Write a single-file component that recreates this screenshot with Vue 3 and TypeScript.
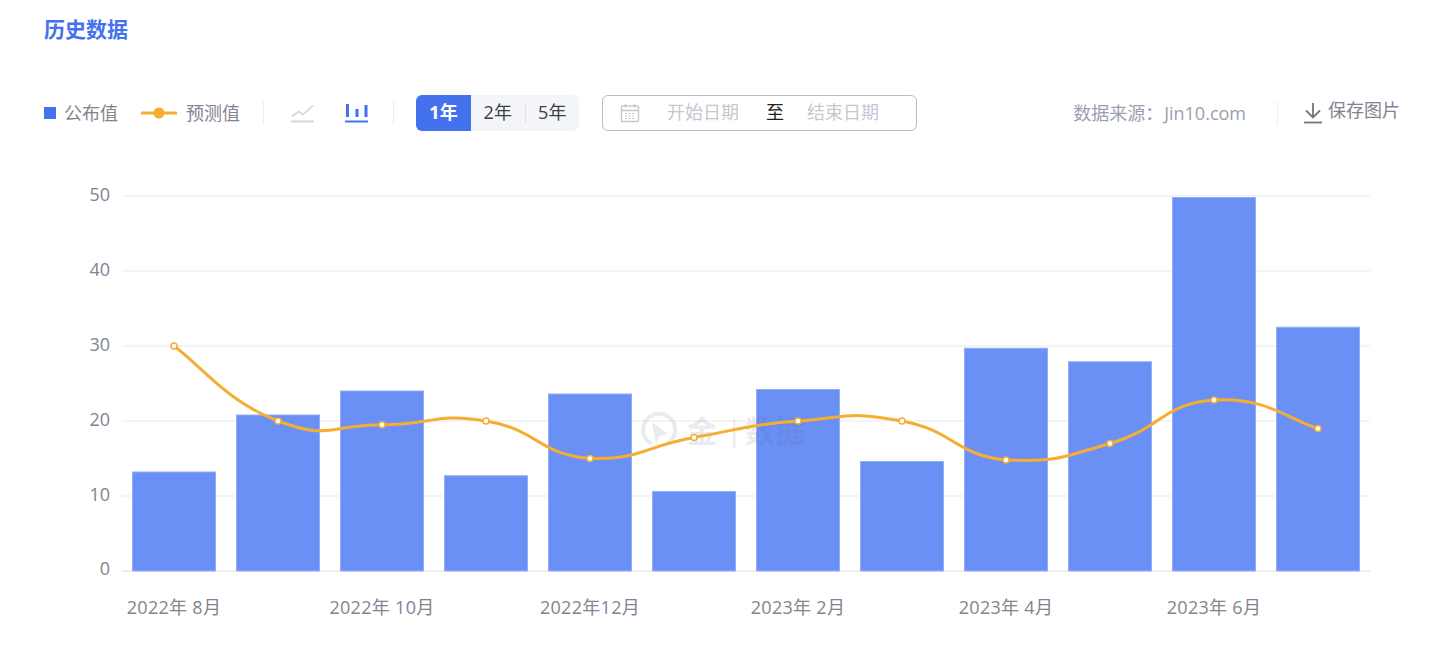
<template>
  <div class="page">
    <h2 class="title">历史数据</h2>

    <div class="toolbar">
      <div class="legend">
        <span class="legend-square"></span>
        <span class="label">公布值</span>
      </div>
      <div class="legend legend-line">
        <svg width="36" height="14" viewBox="0 0 36 14">
          <path d="M1 7H35" stroke="#f5ae31" stroke-width="3" stroke-linecap="round" />
          <circle cx="18" cy="7" r="5.5" fill="#f5ae31" />
        </svg>
        <span class="label">预测值</span>
      </div>
      <span class="divider first"></span>
      <svg class="type-icon" width="24" height="20" viewBox="0 0 24 20" fill="none" stroke="#d2d4d9">
        <path d="M1 13.5L7.5 8.5L12 11.5L22 2.5" stroke-width="1.6" />
        <path d="M0 18.5H23" stroke-width="2" />
      </svg>
      <svg class="type-icon bars" width="24" height="20" viewBox="0 0 24 20" fill="none" stroke="#4472ee">
        <path d="M2.5 1V14M12 6V14M21 2V14" stroke-width="3" />
        <path d="M0 18.5H23" stroke-width="2" />
      </svg>
      <span class="divider second"></span>

      <div class="tabs">
        <span class="tab active">1年</span>
        <span class="tab">2年</span>
        <span class="tab-sep"></span>
        <span class="tab">5年</span>
      </div>

      <div class="date-box">
        <svg width="20" height="20" viewBox="0 0 20 20" fill="none" stroke="#c4c7cd" stroke-width="1.4">
          <rect x="1.5" y="3" width="17" height="15.5" rx="1" />
          <path d="M1.5 7.5H18.5M5.5 1V4.5M14.5 1V4.5" />
          <path d="M5 10.5H15M5 13H15M5 15.5H15" stroke-dasharray="2 1.5" stroke-width="1.2" />
        </svg>
        <span class="placeholder start">开始日期</span>
        <span class="to">至</span>
        <span class="placeholder">结束日期</span>
      </div>

      <div class="right">
        <span class="source">数据来源：<span class="source-site">Jin10.com</span></span>
        <span class="divider third"></span>
        <svg width="20" height="22" viewBox="0 0 20 22" fill="none" stroke="#71767f" stroke-width="1.8">
          <path d="M10 1V15M3 8.5L10 15.5L17 8.5" />
          <path d="M1 20.5H19" />
        </svg>
        <span class="save">保存图片</span>
      </div>
    </div>

    <svg class="chart" width="1447" height="490" viewBox="0 155 1447 490">
      <line
        v-for="tick in ticks"
        :key="tick"
        x1="122"
        x2="1370"
        :y1="toY(tick)"
        :y2="toY(tick)"
        :stroke="tick === 0 ? '#e6e9f0' : '#f0f1f4'"
        stroke-width="1.5"
      />
      <text
        v-for="tick in ticks"
        :key="'y' + tick"
        x="110"
        :y="toY(tick) + (tick === 0 ? 4 : 5)"
        class="axis"
        text-anchor="end"
      >{{ tick }}</text>

      <rect
        v-for="(bar, i) in published"
        :key="'b' + i"
        :x="toX(i) - 41.5"
        :y="toY(bar)"
        width="83"
        :height="571 - toY(bar)"
        fill="#6b90f5"
        stroke="#92aef8"
        stroke-width="1"
      />

      <g class="watermark">
        <path d="M668 443A16 16 0 1 0 652 444" fill="none" stroke="#4f6284" stroke-width="4" />
        <path d="M652 422L668 434L659 436L656 446Z" fill="#4f6284" />
        <text x="687" y="442" class="mark-text">金</text>
        <text x="726" y="441" class="mark-text thin">|</text>
        <text x="745" y="442" class="mark-text">数据</text>
      </g>

      <path :d="linePath" fill="none" stroke="#f5ae31" stroke-width="3" />
      <circle
        v-for="(value, i) in forecast"
        :key="'p' + i"
        :cx="toX(i)"
        :cy="toY(value)"
        r="3"
        fill="#fff"
        stroke="#f5ae31"
        stroke-width="1.5"
      />

      <text
        v-for="label in xLabels"
        :key="label.text"
        :x="toX(label.index)"
        y="614"
        class="axis date"
        text-anchor="middle"
      >{{ label.text }}</text>
    </svg>
  </div>
</template>

<script setup lang="ts">
import { computed } from 'vue';

const ticks = [50, 40, 30, 20, 10, 0];
const published = [13.2, 20.8, 24, 12.7, 23.6, 10.6, 24.2, 14.6, 29.7, 27.9, 49.8, 32.5];
const forecast = [30, 20, 19.5, 20, 15, 17.8, 20, 20, 14.8, 17, 22.8, 19];
const xLabels = [
  { index: 0, text: '2022年 8月' },
  { index: 2, text: '2022年 10月' },
  { index: 4, text: '2022年12月' },
  { index: 6, text: '2023年 2月' },
  { index: 8, text: '2023年 4月' },
  { index: 10, text: '2023年 6月' },
];
// the curve leaves these two lows almost flat
const flatLows = [4, 8];

const toX = (i: number) => 174 + i * 104;
const toY = (v: number) => 571 - v * 7.5;

// same idea as echarts smooth line: control points follow the neighbours
const linePath = computed(() => {
  const pts = forecast.map((v, i) => [toX(i), toY(v)]);
  const k = 0.25;
  let d = `M${pts[0][0]} ${pts[0][1]}`;
  for (let i = 0; i < pts.length - 1; i++) {
    const prev = pts[i - 1] ?? pts[i];
    const cur = pts[i];
    const next = pts[i + 1];
    const after = pts[i + 2] ?? next;
    const c1x = cur[0] + (next[0] - prev[0]) * k;
    const c1y = cur[1] + (next[1] - prev[1]) * (flatLows.includes(i) ? 0.08 : k);
    const c2x = next[0] - (after[0] - cur[0]) * k;
    const c2y = next[1] - (after[1] - cur[1]) * k;
    d += `C${c1x} ${c1y} ${c2x} ${c2y} ${next[0]} ${next[1]}`;
  }
  return d;
});
</script>

<style scoped>
.page {
  width: 1447px;
  height: 645px;
  overflow: hidden;
  background: #fff;
  font-family: "Open Sans", "Noto Sans CJK SC", sans-serif;
  font-size: 18px;
  color: #80858f;
}

.title {
  margin: 0;
  padding: 14px 0 1px 44px;
  height: 30px;
  font-size: 21px;
  line-height: 30px;
  font-weight: 700;
  color: #4472ee;
}

.toolbar {
  display: flex;
  align-items: center;
  height: 36px;
  margin-top: 50px;
  padding: 0 47px 0 44px;
}

.legend {
  display: flex;
  align-items: center;
}

.label {
  padding-bottom: 2px;
}

.legend-square {
  width: 12px;
  height: 12px;
  margin-right: 8px;
  background: #4472ee;
}

.legend-line {
  margin-left: 23px;
}

.legend-line svg {
  margin-right: 9px;
}

.divider {
  width: 1px;
  height: 24px;
  background: #eeeff2;
}

.divider.first {
  margin: 0 27px 0 23px;
}

.divider.second {
  margin: 0 22px 0 24px;
}

.divider.third {
  margin: 0 25px 0 31px;
}

.type-icon.bars {
  margin-left: 30px;
}

.tabs {
  display: flex;
  align-items: center;
  width: 163px;
  height: 36px;
  border-radius: 6px;
  background: #f3f5f9;
  overflow: hidden;
  color: #3c3f47;
}

.tab {
  flex: 1;
  height: 36px;
  line-height: 35px;
  text-align: center;
}

.tab.active {
  flex: 0 0 55px;
  background: #4472ee;
  color: #fff;
  font-weight: 700;
}

.tab-sep {
  width: 1px;
  height: 20px;
  background: #dfe1e6;
}

.date-box {
  display: flex;
  align-items: center;
  width: 315px;
  height: 36px;
  box-sizing: border-box;
  margin-left: 23px;
  padding-left: 17px;
  border: 1px solid #b9bcc2;
  border-radius: 6px;
}

.placeholder {
  padding-bottom: 5px;
  color: #c5c8d0;
}

.placeholder.start {
  margin-left: 27px;
}

.to {
  margin: 0 23px 0 27px;
  padding-bottom: 5px;
  color: #222;
}

.right {
  display: flex;
  align-items: center;
  margin-left: auto;
}

.source {
  padding-bottom: 2px;
  color: #9a9fb0;
}

.source-site {
  margin-left: 1px;
}

.save {
  margin-left: 5px;
  padding-bottom: 8px;
  color: #80858f;
}

.chart {
  display: block;
  margin-top: 24px;
}

.axis {
  font-size: 18px;
  fill: #80858f;
}

.axis.date {
  letter-spacing: 0.3px;
}

.watermark {
  opacity: 0.12;
}

.mark-text {
  font-size: 30px;
  font-weight: 700;
  fill: #4f6284;
}

.mark-text.thin {
  font-weight: 400;
}
</style>
